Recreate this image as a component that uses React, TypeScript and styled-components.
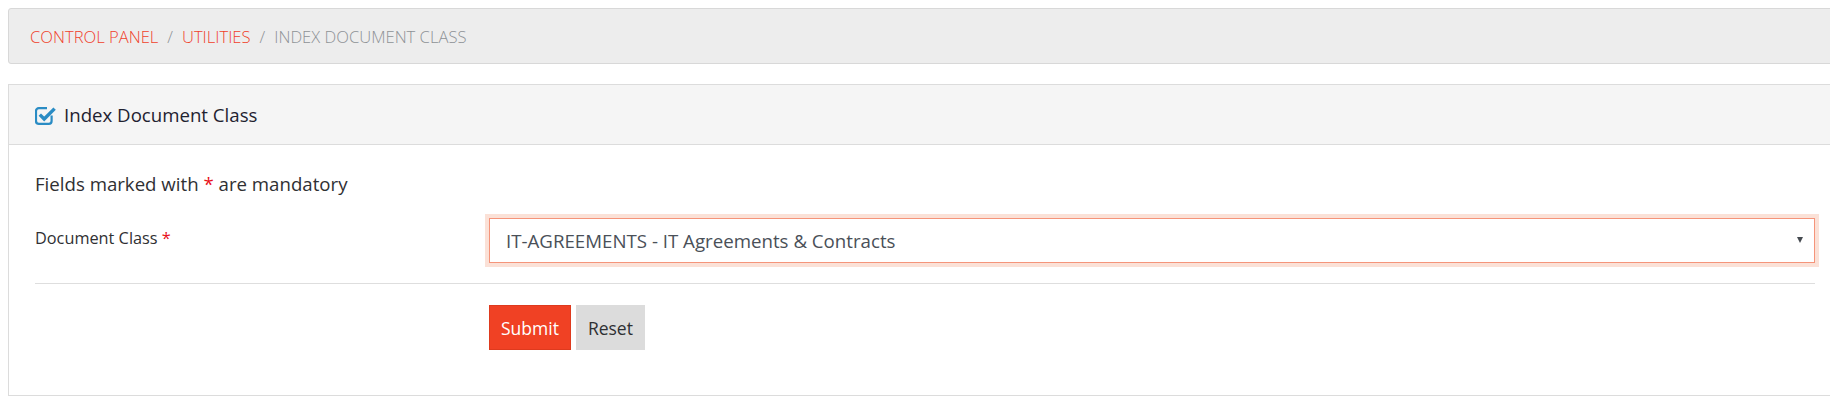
import React from "react";
import styled, { createGlobalStyle } from "styled-components";

const Global = createGlobalStyle`
  html, body { margin: 0; padding: 0; overflow: hidden; background: #fff; }
  body { font-family: "Open Sans", "Liberation Sans", sans-serif; color: #333; }
  * { box-sizing: border-box; }
`;

const Page = styled.div`
  width: 1834px;
  margin: 8px 0 0 8px;
`;

const Breadcrumb = styled.nav`
  display: flex;
  align-items: center;
  height: 56px;
  padding: 0 0 0 21px;
  background: #ededed;
  border: 1px solid #d8d8d8;
  border-radius: 3px;
  font-size: 16.6px;
  font-weight: 300;
  text-transform: uppercase;
`;

const Crumb = styled.span<{ $current?: boolean }>`
  color: ${(p) => (p.$current ? "#8e9296" : "#f0412b")};
`;

const Sep = styled.span`
  color: #8e9296;
  padding: 0 9px;
`;

const Panel = styled.section`
  margin-top: 20px;
  border: 1px solid #dcdcdc;
  height: 312px;
`;

const PanelHeader = styled.header`
  display: flex;
  align-items: center;
  gap: 8px;
  height: 60px;
  padding: 0 0 0 26px;
  background: #f5f5f5;
  border-bottom: 1px solid #dcdcdc;
  font-size: 18.65px;
  color: #1f2230;
`;

const PanelBody = styled.div`
  padding: 26px 26px 0 26px;
`;

const Note = styled.p`
  margin: 0;
  font-size: 18.65px;
  color: #2f3033;
  line-height: 26px;
`;

const Star = styled.span`
  color: #e8101a;
`;

const Row = styled.div`
  display: grid;
  grid-template-columns: 454px 1fr;
  margin-top: 21px;
`;

const Label = styled.label`
  font-size: 16.3px;
  color: #2f3033;
  line-height: 40px;
`;

const SelectWrap = styled.div`
  position: relative;
  height: 45px;
  border: 1px solid #f5947a;
  box-shadow: 0 0 0 4px #fbe1d7;
  background: #fff;
  display: flex;
  align-items: center;
  padding-left: 16px;
  font-size: 18.7px;
  color: #4a5058;
`;

const Arrow = styled.span`
  position: absolute;
  right: 11px;
  top: 18px;
  width: 0;
  height: 0;
  border-left: 3.5px solid transparent;
  border-right: 3.5px solid transparent;
  border-top: 6px solid #454a50;
`;

const Divider = styled.hr`
  margin: 20px 0 0 0;
  border: 0;
  border-top: 1px solid #dedede;
`;

const Actions = styled.div`
  display: flex;
  gap: 5px;
  margin: 21px 0 0 454px;
`;

const Button = styled.button<{ $primary?: boolean }>`
  height: 45px;
  padding: 0 11px;
  font-family: "Open Sans", "Liberation Sans", sans-serif;
  font-size: 17.5px;
  border: 1px solid ${(p) => (p.$primary ? "#de3a1e" : "#dcdcdc")};
  background: ${(p) => (p.$primary ? "#f04124" : "#dcdcdc")};
  color: ${(p) => (p.$primary ? "#fff" : "#2f3033")};
  cursor: pointer;
`;

const CheckIcon = () => (
  <svg width="21" height="20" viewBox="0 0 21 20" aria-hidden="true">
    <path
      d="M16.6 10.5 V16 a2.8 2.8 0 0 1 -2.8 2.8 H3.8 a2.8 2.8 0 0 1 -2.8 -2.8 V6 a2.8 2.8 0 0 1 2.8 -2.8 H12"
      fill="none"
      stroke="#2a8cc4"
      strokeWidth="2.2"
    />
    <path
      d="M4.8 9.6 L9.2 14 L19.6 3.6"
      fill="none"
      stroke="#2a8cc4"
      strokeWidth="3.4"
      strokeLinecap="butt"
      strokeLinejoin="miter"
    />
  </svg>
);

export default function App() {
  return (
    <>
      <Global />
      <Page>
        <Breadcrumb>
          <Crumb>Control Panel</Crumb>
          <Sep>/</Sep>
          <Crumb>Utilities</Crumb>
          <Sep>/</Sep>
          <Crumb $current>Index Document Class</Crumb>
        </Breadcrumb>
        <Panel>
          <PanelHeader>
            <CheckIcon />
            <span>Index Document Class</span>
          </PanelHeader>
          <PanelBody>
            <Note>
              Fields marked with <Star>*</Star> are mandatory
            </Note>
            <Row>
              <Label>
                Document Class <Star>*</Star>
              </Label>
              <SelectWrap>
                IT-AGREEMENTS - IT Agreements &amp; Contracts
                <Arrow />
              </SelectWrap>
            </Row>
            <Divider />
            <Actions>
              <Button $primary>Submit</Button>
              <Button>Reset</Button>
            </Actions>
          </PanelBody>
        </Panel>
      </Page>
    </>
  );
}
